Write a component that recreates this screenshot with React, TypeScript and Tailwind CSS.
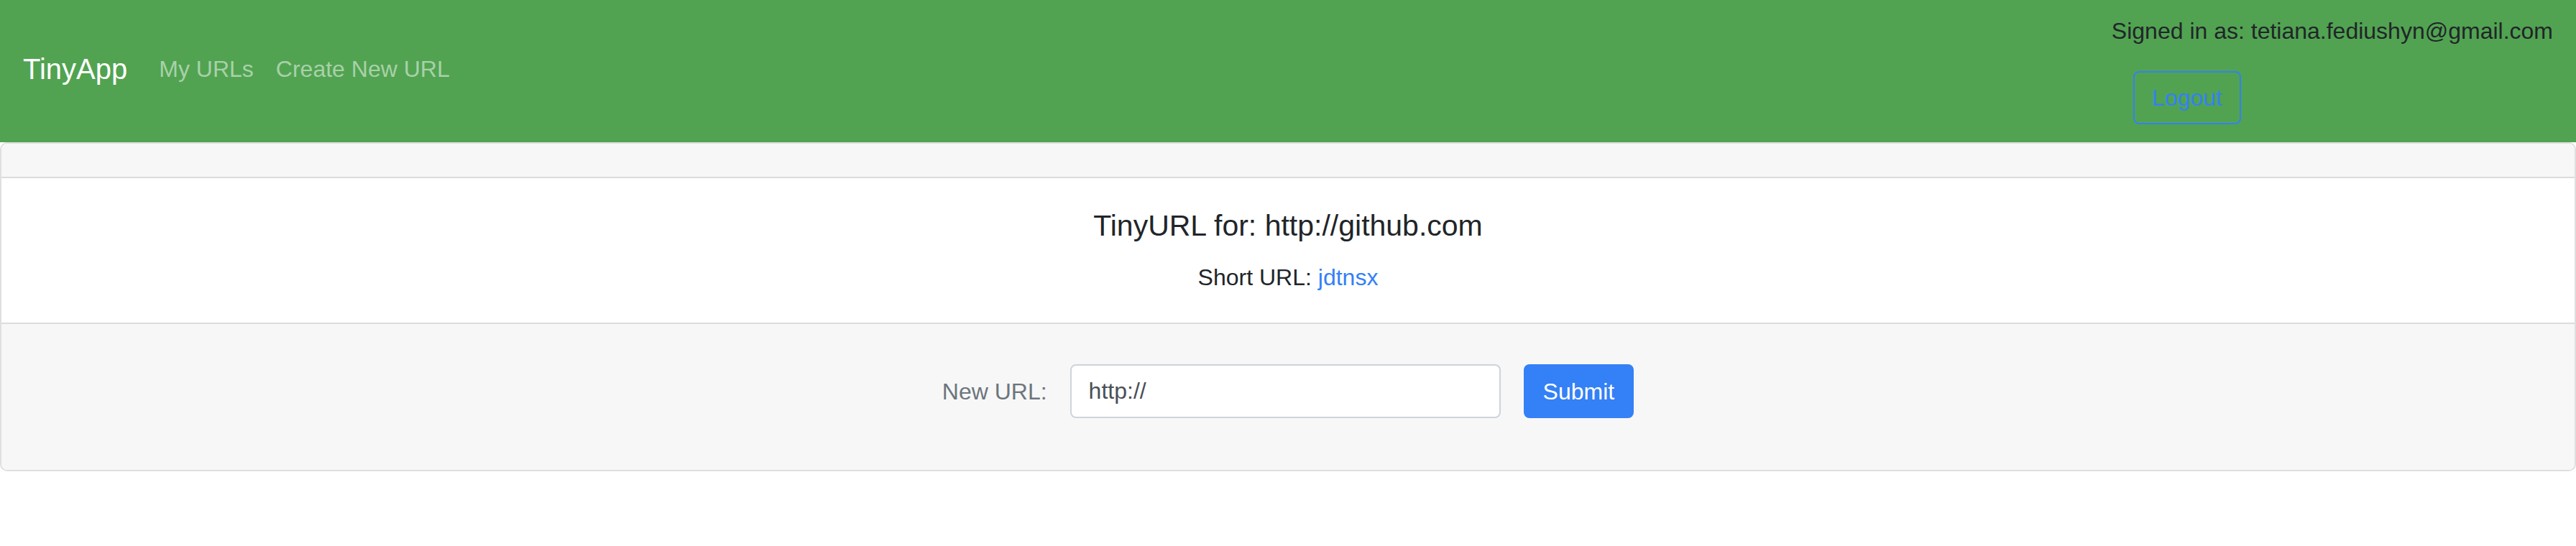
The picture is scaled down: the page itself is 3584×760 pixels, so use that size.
export default function App() {
  return (
    <div className="min-h-[760px] bg-white font-['Liberation_Sans',Arial,sans-serif] text-[32px] leading-[48px] text-[#212529]">
      <nav className="flex items-center justify-between bg-[#51a351] pl-[32px] pr-[32px] pt-[19px] pb-[25px]">
        <div className="flex items-center">
          <a href="#" className="mr-[28px] text-[40px] leading-[60px] text-white">
            TinyApp
          </a>
          <a href="#" className="px-[16px] text-[#a8d1a8]">
            My URLs
          </a>
          <a href="#" className="px-[15px] text-[#a8d1a8]">
            Create New URL
          </a>
        </div>
        <div className="flex flex-col items-start">
          <span>Signed in as: tetiana.fediushyn@gmail.com</span>
          <button className="ml-[30px] mt-[32px] h-[74px] rounded-[8px] border-2 border-[#3480f6] px-[24px] text-[#3480f6]">
            Logout
          </button>
        </div>
      </nav>

      <div className="overflow-hidden rounded-[10px] border-2 border-[#dfdfdf]">
        <div className="h-[48px] border-b-2 border-[#dcdcdc] bg-[#f7f7f7]" />
        <div className="h-[201px] bg-white px-[40px] pt-[42px] text-center">
          <h4 className="mb-[24px] text-[41px] leading-[48px]">TinyURL for: http://github.com</h4>
          <p>
            Short URL: <a href="#" className="text-[#3480f6]">jdtnsx</a>
          </p>
        </div>
        <div className="flex items-start justify-center gap-[32px] border-t-2 border-[#dcdcdc] bg-[#f7f7f7] pt-[56px] pb-[72px]">
          <label className="flex h-[75px] items-center text-[#6c757d]">New URL:</label>
          <input
            type="text"
            defaultValue="http://"
            className="h-[75px] w-[599px] rounded-[8px] border-2 border-[#ced4da] bg-white px-[24px] text-[32px] text-[#495057] outline-none"
          />
          <button className="h-[75px] rounded-[8px] bg-[#3480f6] px-[27px] text-white">Submit</button>
        </div>
      </div>
    </div>
  );
}
